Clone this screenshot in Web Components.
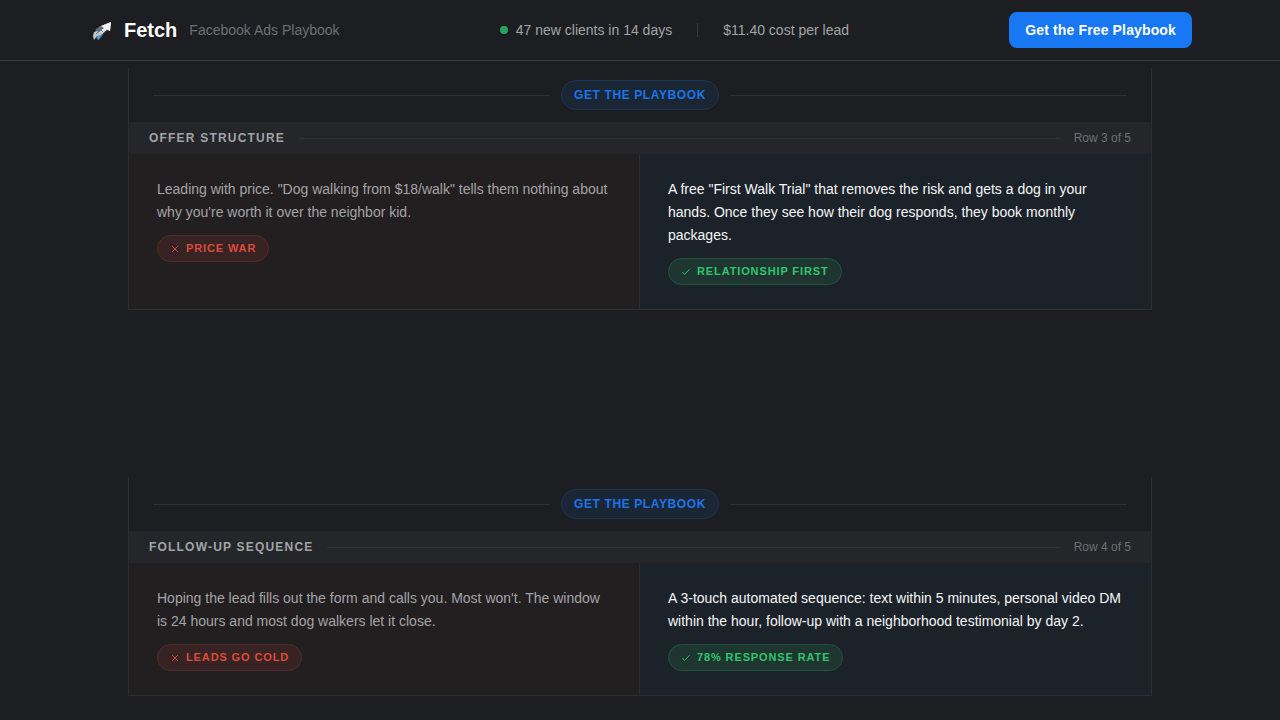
<!DOCTYPE html>
<html lang="en">
<head>
<meta charset="utf-8">
<meta name="viewport" content="width=device-width, initial-scale=1">
<title>Fetch – Facebook Ads Playbook</title>
<style>
  :root {
    --bg: #1c1e21;
    --strip: #242629;
    --line: #2c2e31;
    --blue: #1b74e8;
    --green: #30c670;
    --red: #df4b3a;
    --text: #f5f6f7;
    --text-soft: #a2a4a7;
    --text-muted: #6e7074;
  }
  body {
    margin: 0;
    background: var(--bg);
    color: var(--text);
    font: 14px/23px "Liberation Sans", Arial, sans-serif;
  }
  main {
    display: flex;
    flex-direction: column;
    gap: 167px;
    max-width: 1024px;
    margin: 0 auto;
    padding: 7px 24px 24px;
  }
  p { margin: 0; }
</style>
</head>
<body>
<site-header></site-header>
<main>
  <playbook-row>
    <span slot="title">Offer Structure</span>
    <span slot="count">Row 3 of 5</span>
    <p slot="before">Leading with price. "Dog walking from $18/walk" tells them nothing about why you're worth it over the neighbor kid.</p>
    <outcome-tag slot="before" kind="bad">Price War</outcome-tag>
    <p slot="after">A free "First Walk Trial" that removes the risk and gets a dog in your hands. Once they see how their dog responds, they book monthly packages.</p>
    <outcome-tag slot="after" kind="good">Relationship First</outcome-tag>
  </playbook-row>
  <playbook-row>
    <span slot="title">Follow-Up Sequence</span>
    <span slot="count">Row 4 of 5</span>
    <p slot="before">Hoping the lead fills out the form and calls you. Most won't. The window is 24 hours and most dog walkers let it close.</p>
    <outcome-tag slot="before" kind="bad">Leads Go Cold</outcome-tag>
    <p slot="after">A 3-touch automated sequence: text within 5 minutes, personal video DM within the hour, follow-up with a neighborhood testimonial by day 2.</p>
    <outcome-tag slot="after" kind="good">78% Response Rate</outcome-tag>
  </playbook-row>
</main>

<template id="site-header">
  <style>
    :host { display: block; border-bottom: 1px solid #3a3c3f; line-height: 20px; }
    header {
      display: flex; align-items: center; justify-content: space-between;
      max-width: 1104px; height: 60px; margin: 0 auto; padding: 0 48px;
    }
    .brand { display: flex; align-items: center; gap: 12px; }
    .brand svg { width: 24px; height: 24px; }
    .name { font-size: 20px; font-weight: 700; color: #fff; }
    .tagline { color: var(--text-muted); }
    .stats { display: flex; align-items: center; gap: 25px; color: var(--text-soft); }
    .live { display: flex; align-items: center; gap: 8px; }
    .dot { width: 8px; height: 8px; border-radius: 50%; background: #27a560; }
    .rule { width: 1px; height: 14px; background: #34363a; }
    .cta {
      padding: 8px 16px; border-radius: 8px; background: #1877f2; color: #fff;
      font-weight: 700; letter-spacing: 0.01em; text-decoration: none;
    }
  </style>
  <header>
    <div class="brand">
      <svg viewBox="0 0 24 24" aria-hidden="true">
        <path d="M9 13l4-3 3 2-1 5-3 4-2 1-2-2 1-3z" fill="#2f6798"/>
        <path d="M9 19l3-3 1 2-3 4z" fill="#5a9ccc"/>
        <path d="M7 12l5-4 4 1-6 5z" fill="#65717c"/>
        <path d="M10 11l3 1-1 2-3-1z" fill="#34719f"/>
        <path d="M5 18l1-4 3-1 2 1 5-4-3-2 10-4-1 9-3-1-6 5-4 1-3 4z" fill="#c3c5c8"/>
        <path d="M13 8l10-4-1 9-3-2-5 4-2-2 4-3z" fill="#f3f4f5"/>
        <path d="M8 16l5-4 2 2" stroke="#756e70" fill="none"/>
      </svg>
      <span class="name">Fetch</span>
      <span class="tagline">Facebook Ads Playbook</span>
    </div>
    <div class="stats">
      <span class="live"><span class="dot"></span><span>47 new clients in 14 days</span></span>
      <span class="rule"></span>
      <span>$11.40 cost per lead</span>
    </div>
    <a class="cta" href="#playbook">Get the Free Playbook</a>
  </header>
</template>

<template id="playbook-row">
  <style>
    :host { display: block; border: 1px solid var(--line); border-top: 0; }
    .connector { display: flex; align-items: center; gap: 12px; padding: 12px 24px; }
    .connector::before, .connector::after, .fill { content: ""; flex: 1; height: 1px; background: #2e3033; }
    .connector a {
      box-sizing: border-box; height: 30px; padding: 0 12px;
      border: 1px solid #1c3656; border-radius: 15px; background: #1b2635;
      color: var(--blue); font-size: 12px; line-height: 28px; font-weight: 700;
      letter-spacing: 0.05em; text-transform: uppercase; text-decoration: none;
    }
    .head {
      display: flex; align-items: center; gap: 14px; height: 32px; padding: 0 20px;
      background: var(--strip); font-size: 12px; line-height: 16px;
    }
    h2 {
      margin: 0; font-size: 12px; font-weight: 700; letter-spacing: 0.1em;
      text-transform: uppercase; color: var(--text-soft);
    }
    .count { color: var(--text-muted); }
    .cells { display: grid; grid-template-columns: 1fr 1fr; }
    .cell { display: flex; flex-direction: column; align-items: flex-start; gap: 11px; padding: 24px 28px; }
    .before { border-right: 1px solid var(--line); background: #221f20; color: var(--text-soft); }
    .after { background: #1c2229; }
  </style>
  <div class="connector"><a href="#playbook">Get the Playbook</a></div>
  <div class="head">
    <h2><slot name="title"></slot></h2>
    <span class="fill"></span>
    <span class="count"><slot name="count"></slot></span>
  </div>
  <div class="cells">
    <div class="cell before"><slot name="before"></slot></div>
    <div class="cell after"><slot name="after"></slot></div>
  </div>
</template>

<template id="outcome-tag">
  <style>
    :host {
      display: inline-flex; align-items: center; gap: 6px; box-sizing: border-box;
      height: 27px; padding: 0 12px; border: 1px solid; border-radius: 14px;
      font-size: 11px; line-height: 15px; font-weight: 700;
      letter-spacing: 0.08em; text-transform: uppercase;
    }
    :host([kind="bad"]) { color: var(--red); background: #372324; border-color: #572a2a; }
    :host([kind="good"]) { color: var(--green); background: #1e3530; border-color: #215340; }
    svg { width: 10px; height: 10px; fill: none; stroke: currentColor; }
    .cross, .check { display: none; }
    :host([kind="bad"]) .cross, :host([kind="good"]) .check { display: block; }
  </style>
  <svg class="cross" viewBox="0 0 10 10" aria-hidden="true"><path d="M2 2l6 6M8 2l-6 6" stroke-width="0.9"/></svg>
  <svg class="check" viewBox="0 0 10 10" aria-hidden="true"><path d="M1.500 5.200l2 2.300L8.500 2.200"/></svg>
  <slot></slot>
</template>

<script>
  class TemplateElement extends HTMLElement {
    constructor() {
      super();
      const template = document.getElementById(this.localName);
      this.attachShadow({ mode: "open" }).append(template.content.cloneNode(true));
    }
  }
  customElements.define("site-header", class SiteHeader extends TemplateElement {});
  customElements.define("playbook-row", class PlaybookRow extends TemplateElement {});
  customElements.define("outcome-tag", class OutcomeTag extends TemplateElement {});
</script>
</body>
</html>
